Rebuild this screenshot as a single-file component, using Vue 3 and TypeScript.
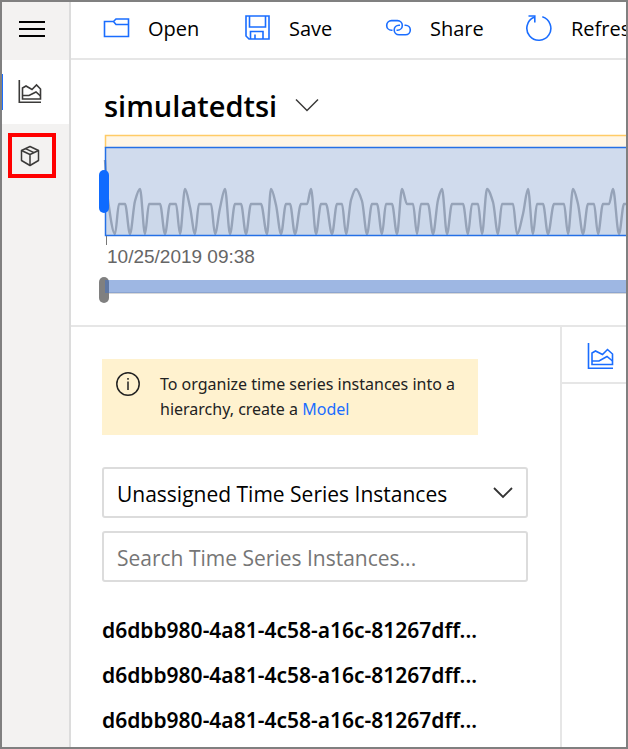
<script setup lang="ts">
import { computed, ref } from 'vue'

type Point = [number, number]

const LOW = 100
const MID = 70
const TOP = 55

/* Samples of the availability curve, in chart pixels from the left edge. */
const samples: Point[] = [
  [3, 26], [6, 66], [13, LOW], [17, MID], [23, MID], [28, LOW], [33, 67], [38, TOP], [43, LOW],
  [47, MID], [58, MID], [63, LOW], [68, MID], [74, MID], [78, LOW], [83, TOP], [88, 73], [93, LOW],
  [97, MID], [109, MID], [113, LOW], [118, 74], [123, TOP], [128, LOW], [133, MID], [139, MID],
  [144, LOW], [149, MID], [159, MID], [165, LOW], [169, TOP], [174, 71], [179, LOW], [184, MID],
  [188, MID], [193, LOW], [199, MID], [205, MID], [209, TOP], [214, LOW], [219, MID], [224, MID],
  [230, LOW], [235, MID], [240, MID], [244, LOW], [249, 66], [254, TOP], [260, 67], [265, LOW],
  [270, MID], [275, MID], [280, LOW], [284, MID], [290, MID], [295, LOW], [300, TOP], [305, MID],
  [311, MID], [315, LOW], [319, MID], [326, MID], [331, LOW], [336, 66], [340, TOP], [345, LOW],
  [350, MID], [361, MID], [366, LOW], [370, MID], [376, MID], [380, LOW], [385, TOP], [391, 68],
  [396, LOW], [400, MID], [411, MID], [415, LOW], [421, 80], [426, TOP], [431, LOW], [435, MID],
  [441, MID], [446, LOW], [452, MID], [462, MID], [466, LOW], [471, TOP], [476, 70], [481, LOW],
  [486, MID], [492, MID], [496, LOW], [501, MID], [507, MID], [511, TOP], [517, LOW], [522, MID],
  [534, MID],
]

/* Monotone cubic interpolation: flat at extremes, smooth in between. */
const curve = computed(() => {
  const slope = (i: number) =>
    (samples[i + 1][1] - samples[i][1]) / (samples[i + 1][0] - samples[i][0])
  const tangents = samples.map((_, i) => {
    if (i === 0) return slope(0)
    if (i === samples.length - 1) return 0
    const a = slope(i - 1)
    const b = slope(i)
    return a * b <= 0 ? 0 : (2 * a * b) / (a + b)
  })
  let d = `M${samples[0][0]},${samples[0][1]}`
  for (let i = 1; i < samples.length; i++) {
    const [x0, y0] = samples[i - 1]
    const [x1, y1] = samples[i]
    const h = (x1 - x0) / 3
    d += `C${x0 + h},${y0 + tangents[i - 1] * h},${x1 - h},${y1 - tangents[i] * h},${x1},${y1}`
  }
  return d
})
const area = computed(() => `${curve.value}V102H3Z`)

const actions = [
  { id: 'open', label: 'Open' },
  { id: 'save', label: 'Save' },
  { id: 'share', label: 'Share' },
  { id: 'refresh', label: 'Refresh' },
]
const hierarchy = ref('Unassigned Time Series Instances')
const query = ref('')
const instances = [1, 2, 3].map((key) => ({ key, name: 'd6dbb980-4a81-4c58-a16c-81267dff...' }))
</script>

<template>
  <div class="frame">
    <nav class="rail" aria-label="Main">
      <button class="rail-item menu" aria-label="Menu">
        <svg width="28" height="20" viewBox="0 0 28 20" stroke="#000" stroke-width="2">
          <path d="M1 3H27M1 10H27M1 17H27" />
        </svg>
      </button>
      <button class="rail-item current" aria-label="Analyze">
        <svg width="24" height="24" viewBox="0 0 24 24" fill="none" stroke="#3b3a39" stroke-width="1.6">
          <path d="M1.3 0V22.3H23" />
          <path d="M4.5 19V8L8 6L14 9.500L18.500 5L22.500 9V19Z" />
          <path d="M4.500 15.500H11L18 12L22.500 16" />
        </svg>
      </button>
      <button class="rail-item model" aria-label="Model">
        <span class="highlight">
          <svg width="20" height="22" viewBox="0 0 20 22" fill="none" stroke="#3b3a39" stroke-width="1.5" stroke-linejoin="round">
            <path d="M10 1.500L18.500 5.500V15.500L10 20.500L1.500 15.500V5.500Z" />
            <path d="M1.500 5.500L10 9.500L18.500 5.500M10 9.500V20.500M5.500 3.600L14 7.600" />
          </svg>
        </span>
      </button>
    </nav>

    <main class="main">
      <header class="toolbar">
        <button v-for="action in actions" :key="action.id" class="action">
          <svg width="28" height="28" viewBox="0 0 28 28" fill="none" stroke="#1a6dff" stroke-width="1.6">
            <path v-if="action.id === 'open'" d="M2.500 7.500H11.500L14 5H26.500V22.500H2.500ZM11.500 7.500L14 10.500H26.500" />
            <template v-else-if="action.id === 'save'">
              <path d="M3 2H26V25H6L3 22Z" />
              <path d="M6.500 2V13H22.500V2M7.500 25V17.500H20V25M12 25V20.500" />
            </template>
            <template v-else-if="action.id === 'share'">
              <path d="M8.500 16.200H7.500A4.800 4.800 0 0 1 7.500 6.600H13.500A4.800 4.800 0 0 1 13.500 16.200H12.500" />
              <path d="M20.500 11.200H21.500A4.800 4.800 0 0 1 21.500 20.800H15A4.800 4.800 0 0 1 15 11.200H16" />
            </template>
            <template v-else>
              <path d="M17.300 2.800A12 12 0 1 1 9 3.300" />
              <path d="M3.500 2H9.800V8.500" />
            </template>
          </svg>
          <span>{{ action.label }}</span>
        </button>
      </header>

      <section class="timeline">
        <button class="environment">
          <span>simulatedtsi</span>
          <svg width="24" height="14" viewBox="0 0 24 14" fill="none" stroke="#3b3a39" stroke-width="1.500">
            <path d="M1 1.500L12 12.500L23 1.500" />
          </svg>
        </button>
        <svg class="chart" height="112" role="img" aria-label="Data availability">
          <rect x="3" y="1" width="100%" height="13" fill="#fff6e6" />
          <path d="M3.500 14V1.500H3000" fill="none" stroke="#ffcb66" stroke-width="1.500" />
          <rect x="3" y="13" width="100%" height="89" fill="#d0dbed" />
          <path :d="area" fill="#ccd8ea" />
          <path :d="curve" fill="none" stroke="#96a3b8" stroke-width="2.400" stroke-linejoin="round" />
          <path d="M3000 13.500H3.500V101.500H3000" fill="none" stroke="#2470e6" stroke-width="1.500" />
          <path d="M4.500 102V111" stroke="#777" />
          <rect x="-3" y="36" width="10" height="43" rx="5" fill="#0f6bff" />
        </svg>
        <time class="stamp">10/25/2019 09:38</time>
        <svg class="scroll" height="28" role="img" aria-label="Visible range">
          <rect x="3" y="15" width="100%" height="2" fill="#d8d8d8" />
          <rect x="-3" y="0" width="10" height="26" rx="5" fill="#808080" />
          <rect x="3" y="3" width="100%" height="13" fill="#3d6fc8" fill-opacity="0.5" />
        </svg>
      </section>

      <div class="workspace">
        <section class="instances">
          <aside class="notice">
            <svg width="26" height="26" viewBox="0 0 26 26" fill="none" stroke="#222" stroke-width="1.500">
              <circle cx="13" cy="12" r="11.200" />
              <path d="M13 9.500V18M13 6V7.800" />
            </svg>
            <p>To organize time series instances into a hierarchy, create a <a href="#model">Model</a></p>
          </aside>
          <div class="picker">
            <select v-model="hierarchy" aria-label="Hierarchy">
              <option>Unassigned Time Series Instances</option>
            </select>
            <svg class="caret" width="20" height="12" viewBox="0 0 20 12" fill="none" stroke="#333" stroke-width="1.800">
              <path d="M1 1L10 10L19 1" />
            </svg>
          </div>
          <input v-model="query" type="text" aria-label="Search" placeholder="Search Time Series Instances..." />
          <ul class="list">
            <li v-for="item in instances" :key="item.key">{{ item.name }}</li>
          </ul>
        </section>
        <section class="plot">
          <button class="tab" aria-label="Line chart">
            <svg width="27" height="27" viewBox="0 0 27 27" fill="none" stroke="#1a6dff" stroke-width="1.600">
              <path d="M1.500 0V25.200H26" />
              <path d="M5 21.500V10L8.500 8L15.500 11.500L20.500 6.500L25.500 11V21.500Z" />
              <path d="M5 18H12L20 13.500L25.500 18" />
            </svg>
          </button>
        </section>
      </div>
    </main>
  </div>
</template>

<style>
body {
  background: #fff;
}
</style>

<style scoped>
* {
  box-sizing: border-box;
}
svg {
  display: block;
  flex: none;
}
button,
select,
input {
  margin: 0;
  padding: 0;
  border: 0;
  background: none;
  color: inherit;
  font: inherit;
}
.frame {
  display: flex;
  min-height: 100vh;
  border: 2px solid #808080;
  background: #fff;
  color: #000;
  font-family: "Segoe UI", "Open Sans", sans-serif;
  font-size: 20px;
  overflow: hidden;
}
.rail {
  display: flex;
  flex: none;
  flex-direction: column;
  width: 69px;
  border-right: 2px solid #dcdcdc;
  background: #f3f2f1;
}
.rail-item {
  display: flex;
  align-items: center;
  height: 64px;
}
.menu {
  height: 58px;
  padding: 0 0 4px 16px;
}
.current {
  gap: 15px;
  background: #fff;
}
.current::before {
  width: 1px;
  height: 36px;
  background: #1a6dff;
  content: "";
}
.model {
  padding: 0 0 2px 6px;
}
.highlight {
  display: flex;
  align-items: center;
  justify-content: center;
  width: 48px;
  height: 45px;
  padding: 2px 4px 0 0;
  border: 4px solid #f00;
}
.main {
  display: flex;
  flex: 1;
  flex-direction: column;
  min-width: 0;
}
.toolbar {
  display: flex;
  height: 58px;
  padding: 0 0 4px 31px;
  border-bottom: 2px solid #e6e6e6;
  overflow: hidden;
}
.action {
  display: flex;
  flex: none;
  align-items: center;
  gap: 18px;
  width: 141px;
}
.timeline {
  height: 267px;
  padding-left: 31px;
  border-bottom: 2px solid #e6e6e6;
}
.environment {
  display: flex;
  align-items: center;
  gap: 18px;
  height: 74px;
  padding: 16px 0 0 2px;
  font-size: 29px;
  font-weight: 600;
}
.chart,
.scroll {
  width: 100%;
  overflow: visible;
}
.stamp {
  display: block;
  height: 31px;
  padding-left: 5px;
  color: #666;
  font: 19px/22px "Liberation Sans", Arial, sans-serif;
}
.workspace {
  display: flex;
  flex: 1;
}
.instances {
  flex: none;
  width: 491px;
  padding: 32px 32px 0 31px;
  border-right: 2px solid #e6e6e6;
}
.notice {
  display: flex;
  gap: 19px;
  width: 376px;
  margin-bottom: 32px;
  padding: 13px 0 13px 13px;
  background: #fff2cf;
  color: #222;
  font-family: "Segoe UI", "Noto Sans", sans-serif;
  font-size: 16px;
  line-height: 25px;
}
.notice p {
  margin: 0;
}
.notice a {
  color: #1a6dff;
  text-decoration: none;
}
.picker {
  position: relative;
  margin-bottom: 13px;
}
select,
input {
  display: block;
  width: 100%;
  height: 51px;
  padding: 2px 13px 0;
  border: 2px solid #dcdcdc;
  border-radius: 3px;
  background: #fff;
  font-size: 21px;
  appearance: none;
}
input::placeholder {
  color: #767676;
  opacity: 1;
}
.caret {
  position: absolute;
  top: 20px;
  right: 15px;
  pointer-events: none;
}
.list {
  margin: 26px 0 0;
  padding: 0;
  list-style: none;
  font-family: "Segoe UI", "Noto Sans", sans-serif;
  font-size: 21px;
  font-weight: 600;
  line-height: 45px;
  white-space: nowrap;
}
.plot {
  flex: 1;
  min-width: 0;
}
.tab {
  display: flex;
  width: 100%;
  height: 57px;
  padding: 16px 0 0 25px;
  border-bottom: 2px solid #e6e6e6;
}
</style>
